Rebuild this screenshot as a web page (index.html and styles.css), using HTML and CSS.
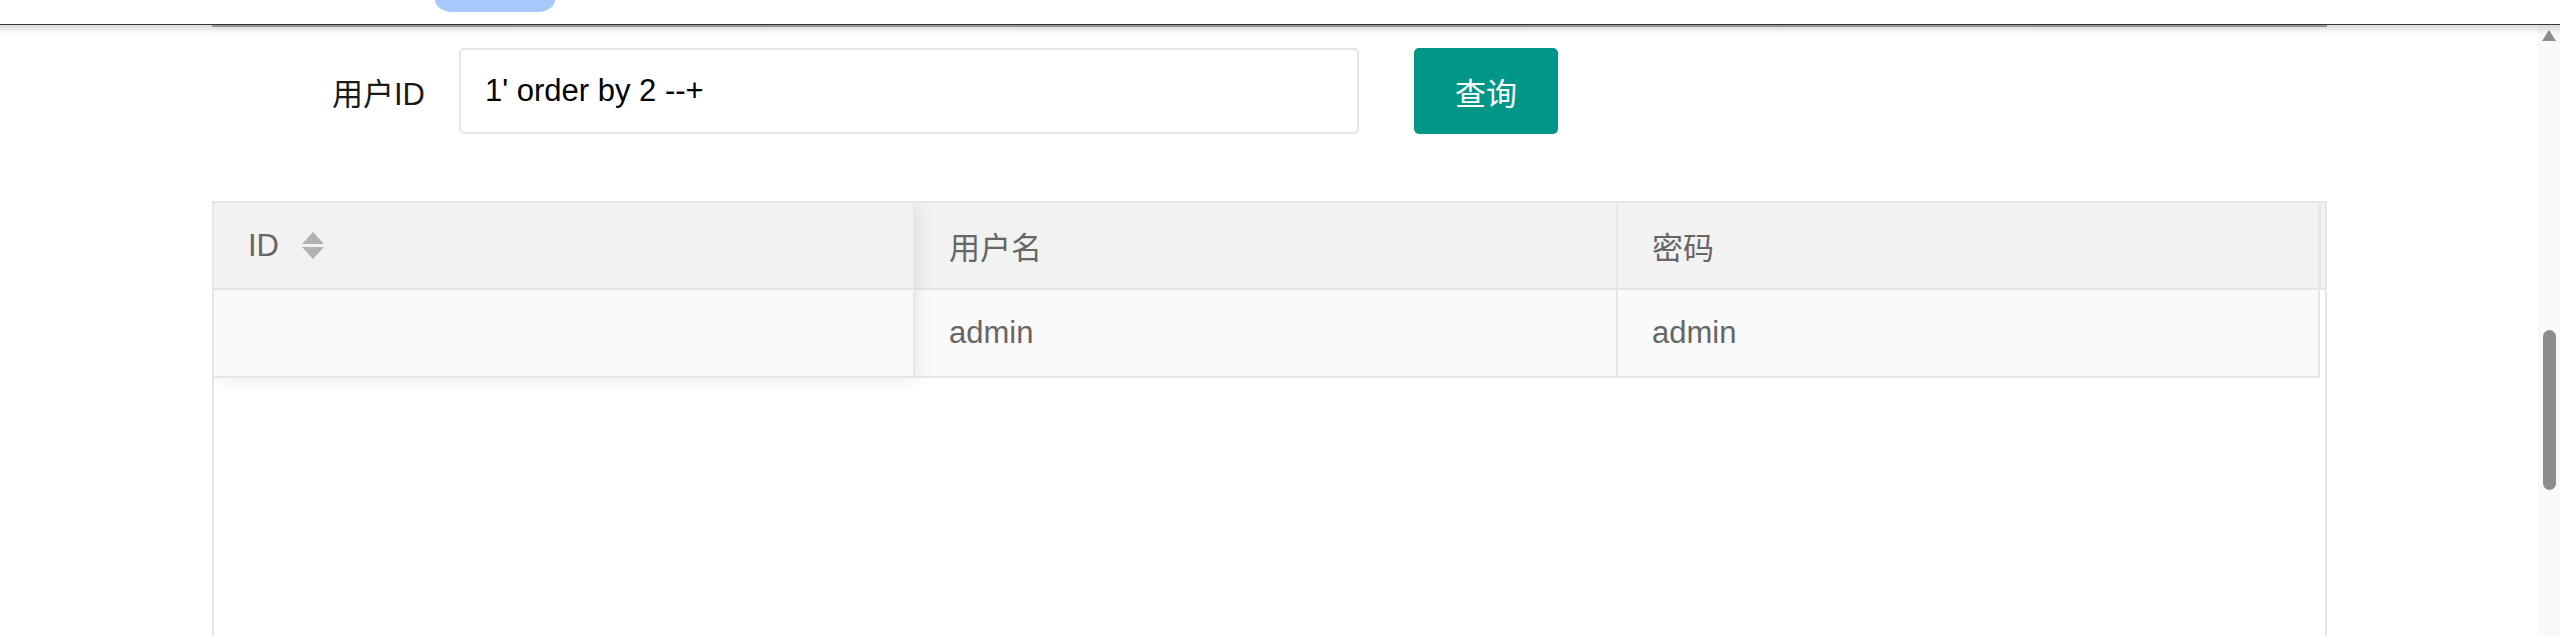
FILE: index.html
```html
<!DOCTYPE html>
<html lang="zh-CN">
<head>
<meta charset="utf-8">
<title>用户查询</title>
<link rel="stylesheet" href="styles.css">
</head>
<body>
<div class="topbar"><div class="pill"></div></div>
<div class="topline"><div class="topline-bar"></div></div>
<div class="main">
  <div class="shade"></div>
  <div class="content">
    <div class="container">
      <form class="form-row">
        <label class="form-label">用户ID</label>
        <input class="form-input" type="text" value="1' order by 2 --+">
        <button class="btn" type="button">查询</button>
      </form>
      <div class="table">
        <div class="table-inner">
          <div class="col-fixed">
            <div class="cell head first">
              <span>ID</span>
              <span class="sort">
                <i class="tri up"></i>
                <i class="tri down"></i>
              </span>
            </div>
            <div class="cell body first"></div>
          </div>
          <div class="col-main">
            <div class="row head-row">
              <div class="cell head c2">用户名</div>
              <div class="cell head c3">密码</div>
              <div class="patch"></div>
            </div>
            <div class="row body-row">
              <div class="cell body c2">admin</div>
              <div class="cell body c3">admin</div>
            </div>
          </div>
        </div>
      </div>
    </div>
  </div>
  <div class="scrollbar">
    <i class="sb-arrow"></i>
    <div class="sb-thumb"></div>
  </div>
</div>
</body>
</html>
```

FILE: styles.css
```css
* { box-sizing: border-box; }
html, body { margin: 0; padding: 0; }
body {
  width: 2560px;
  height: 637px;
  overflow: hidden;
  background: #fff;
  font-family: "Liberation Sans", Arial, "Noto Sans CJK SC", sans-serif;
}

.topbar {
  height: 24px;
  position: relative;
}
.pill {
  margin-left: 435px;
  width: 120px;
  height: 12px;
  background: #a8c7fa;
  border-radius: 0 0 18px 18px / 0 0 12px 12px;
}

.topline {
  border-top: 1px solid #3f3f3f;
  height: 2px;
}
.topline-bar {
  margin-left: 212px;
  width: 2115px;
  height: 2px;
  background: #a9a9a9;
}

.main {
  position: relative;
  display: flex;
  height: 610px;
}
.shade {
  position: absolute;
  left: 0;
  right: 0;
  top: -2px;
  height: 10px;
  background: linear-gradient(to bottom, rgba(0,0,0,0.16), rgba(0,0,0,0));
  pointer-events: none;
  z-index: 5;
}

.content {
  flex: 1;
  padding: 22px 0 0 212px;
  overflow: hidden;
}
.container {
  width: 2115px;
  display: flex;
  flex-direction: column;
  height: 100%;
}

.form-row {
  display: flex;
  align-items: center;
  height: 86px;
  margin: 0;
}
.form-label {
  width: 247px;
  padding: 0 34px;
  text-align: right;
  font-size: 31px;
  color: #1a1a1a;
  font-family: "Liberation Sans", Arial, "Noto Sans CJK SC", sans-serif;
}
.form-input {
  width: 900px;
  height: 86px;
  border: 2px solid #e6e6e6;
  border-radius: 5px;
  padding: 0 0 0 24px;
  font-size: 31px;
  color: #000;
  font-family: "Liberation Sans", Arial, "Noto Sans CJK SC", sans-serif;
  outline: none;
  background: #fff;
}
.btn {
  margin-left: 55px;
  width: 144px;
  height: 86px;
  border: 0;
  border-radius: 5px;
  background: #009688;
  color: #fff;
  font-size: 31px;
  font-family: "Noto Sans CJK SC", sans-serif;
  padding: 0;
}

.table {
  margin-top: 67px;
  flex: 1;
  border: 2px solid #e6e6e6;
  border-bottom: 0;
  color: #666;
  font-size: 31px;
  overflow: hidden;
}
.table-inner {
  display: flex;
  align-items: flex-start;
}

.cell {
  display: flex;
  align-items: center;
  padding: 0 34px;
  border-right: 2px solid #e6e6e6;
  border-bottom: 2px solid #e6e6e6;
}
.cell.head {
  height: 87px;
  background: #f2f2f2;
}
.cell.body {
  height: 88px;
  background: #fafafa;
}

.col-fixed {
  position: relative;
  z-index: 2;
  width: 701px;
  box-shadow: 3px 2px 16px rgba(0,0,0,0.08);
}
.col-fixed .cell { width: 701px; }

.sort {
  display: flex;
  flex-direction: column;
  gap: 3px;
  margin-left: 23px;
}
.tri {
  display: block;
  width: 0;
  height: 0;
  border-left: 11px solid transparent;
  border-right: 11px solid transparent;
}
.tri.up { border-bottom: 12px solid #b2b2b2; }
.tri.down { border-top: 12px solid #b2b2b2; }

.col-main {
  flex: 1;
  display: flex;
  flex-direction: column;
}
.row { display: flex; }
.cell.c2 { width: 703px; }
.cell.c3 { width: 702px; }
.patch {
  flex: 1;
  height: 87px;
  background: #f2f2f2;
  border-left: 1px solid #e6e6e6;
  border-bottom: 2px solid #e6e6e6;
}

.scrollbar {
  width: 22px;
  background: #f9f9f9;
  display: flex;
  flex-direction: column;
  align-items: center;
  padding-top: 4px;
}
.sb-arrow {
  display: block;
  width: 0;
  height: 0;
  border-left: 7px solid transparent;
  border-right: 7px solid transparent;
  border-bottom: 11px solid #8d8d8d;
}
.sb-thumb {
  margin-top: 289px;
  width: 13px;
  height: 160px;
  border-radius: 7px;
  background: #8d8d8d;
}
```
